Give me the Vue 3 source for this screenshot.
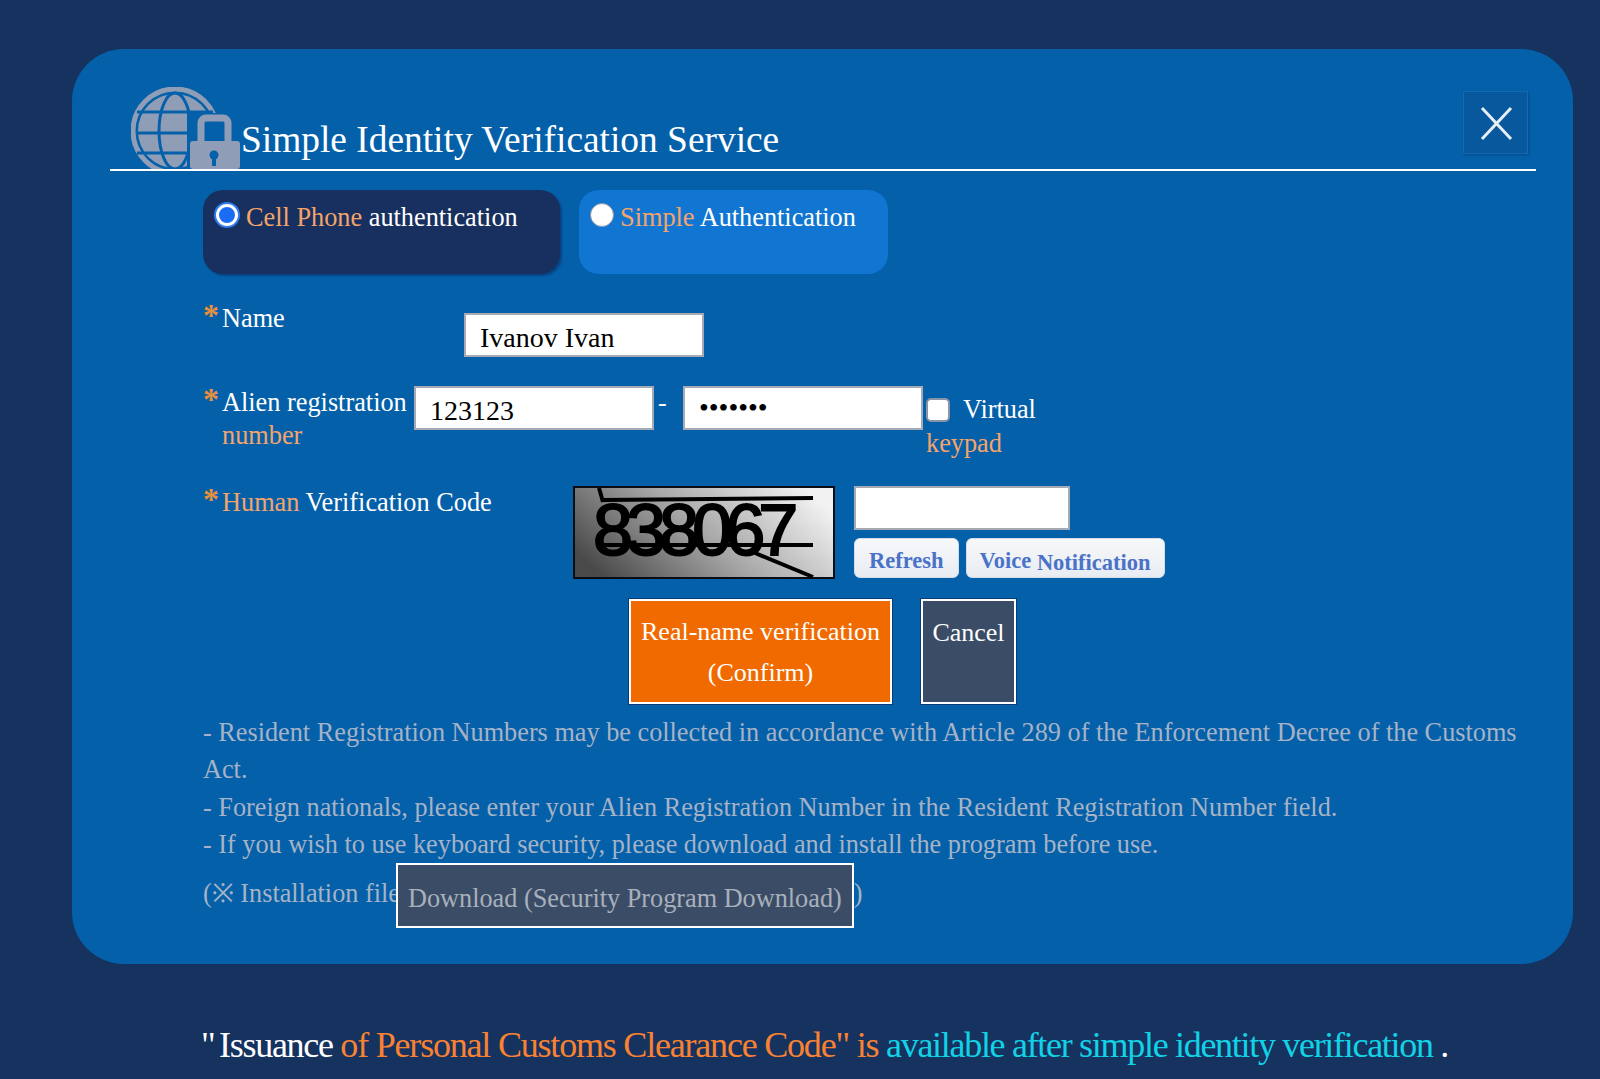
<template>
  <div class="page">
    <div class="modal">
      <div class="modal-head">
        <svg class="head-icon" viewBox="0 0 109 82" width="109" height="82">
          <circle cx="44" cy="44" r="42" fill="none" stroke="#8f9eb6" stroke-width="5" />
          <circle cx="44" cy="44" r="37" fill="#8f9eb6" />
          <ellipse cx="44" cy="44" rx="16" ry="38" fill="none" stroke="#0560aa" stroke-width="3" />
          <line x1="6" y1="25" x2="82" y2="25" stroke="#0560aa" stroke-width="3" />
          <line x1="6" y1="46" x2="82" y2="46" stroke="#0560aa" stroke-width="3" />
          <line x1="6" y1="66" x2="82" y2="66" stroke="#0560aa" stroke-width="3" />
          <rect x="56" y="26" width="60" height="60" fill="#0560aa" />
          <path d="M70 54V36a5 5 0 0 1 5-5h17a5 5 0 0 1 5 5v18" fill="none" stroke="#8f9eb6" stroke-width="7" />
          <rect x="59" y="54" width="50" height="28" rx="3" fill="#8f9eb6" />
          <circle cx="83" cy="68" r="4.5" fill="#0560aa" />
          <rect x="81" y="69" width="4" height="10" fill="#0560aa" />
        </svg>
        <h1 class="head-title">Simple Identity Verification Service</h1>
        <button class="close-btn" aria-label="Close">
          <svg viewBox="0 0 64 62" width="64" height="62">
            <path d="M18 16L47 47M47 16L18 47" stroke="#e6eef6" stroke-width="3" fill="none" />
          </svg>
        </button>
      </div>

      <div class="modal-body">
        <div class="tabs">
          <label class="tab" :class="{ active: method === 'phone' }">
            <input v-model="method" type="radio" value="phone" />
            <span><em>Cell Phone</em> authentication</span>
          </label>
          <label class="tab" :class="{ active: method === 'simple' }">
            <input v-model="method" type="radio" value="simple" />
            <span><em>Simple</em> Authentication</span>
          </label>
        </div>

        <div class="row row-name">
          <div class="label label-name"><i>*</i><span>Name</span></div>
          <input v-model="name" class="field" type="text" />
        </div>

        <div class="row row-alien">
          <div class="label label-alien"><i>*</i><span>Alien registration <em>number</em></span></div>
          <input v-model="regFront" class="field" type="text" />
          <span class="dash">-</span>
          <input v-model="regBack" class="field field-pw" type="password" />
          <div class="keypad">
            <label class="keypad-top"><input v-model="virtualKeypad" type="checkbox" /> <span>Virtual</span></label>
            <em>keypad</em>
          </div>
        </div>

        <div class="row row-human">
          <div class="label label-human"><i>*</i><span><em>Human</em> Verification Code</span></div>
          <svg class="captcha" viewBox="0 0 262 93" width="262" height="93">
            <defs>
              <linearGradient id="capBg" x1="0" y1="0.7" x2="1" y2="0.3">
                <stop offset="0" stop-color="#4a4a4a" />
                <stop offset="0.5" stop-color="#a8a8a8" />
                <stop offset="1" stop-color="#f2f2f2" />
              </linearGradient>
            </defs>
            <rect x="1" y="1" width="260" height="91" fill="url(#capBg)" stroke="#0c0c14" stroke-width="2" />
            <text x="20" y="69" class="captcha-text">838067</text>
            <path d="M26 2L30 16M30 14L240 12M30 59L240 59M182 67L240 91" stroke="#000" stroke-width="4" fill="none" />
          </svg>
          <div class="captcha-side">
            <input v-model="code" class="field field-code" type="text" />
            <div class="captcha-btns">
              <button class="light-btn">Refresh</button>
              <button class="light-btn light-btn-voice">Voice <span class="notif">Notification</span></button>
            </div>
          </div>
        </div>

        <div class="actions">
          <button class="btn-confirm">Real-name verification<br />(Confirm)</button>
          <button class="btn-cancel">Cancel</button>
        </div>

        <div class="notes">
          <p>- Resident Registration Numbers may be collected in accordance with Article 289 of the Enforcement Decree of the Customs Act.</p>
          <p>- Foreign nationals, please enter your Alien Registration Number in the Resident Registration Number field.</p>
          <p>- If you wish to use keyboard security, please download and install the program before use.</p>
          <div class="install">
            <span class="install-text">(※ Installation file</span>
            <button class="btn-download">Download (Security Program Download)</button>
            <span>)</span>
          </div>
        </div>
      </div>
    </div>

    <p class="foot">" <b class="first">Issuance</b> <span class="or">of Personal Customs Clearance Code" is</span> <span class="cy">available after simple identity verification</span> <b>.</b></p>
  </div>
</template>

<script setup>
import { ref } from 'vue'

const method = ref('phone')
const name = ref('Ivanov Ivan')
const regFront = ref('123123')
const regBack = ref('1234567')
const virtualKeypad = ref(false)
const code = ref('')
</script>

<style>
html, body {
  margin: 0;
  background: #16325f;
  overflow: hidden;
}
</style>

<style scoped>
.page {
  height: 1079px;
  padding: 49px 27px 0 72px;
  box-sizing: border-box;
  font-family: "Liberation Serif", serif;
  color: #fff;
}

.page em {
  font-style: normal;
  color: #f4a46a;
}

.modal {
  height: 915px;
  box-sizing: border-box;
  background: #0560aa;
  border-radius: 52px;
  padding: 0 37px 0 38px;
}

.modal-head {
  position: relative;
  height: 122px;
  box-sizing: border-box;
  border-bottom: 2px solid #fff;
  display: flex;
  align-items: flex-end;
  padding-left: 21px;
}

.head-icon {
  flex: none;
}

.head-title {
  margin: 0 0 7px 1px;
  font-size: 37.4px;
  font-weight: 400;
  line-height: 44px;
  white-space: nowrap;
}

.close-btn {
  position: absolute;
  top: 42px;
  right: 8px;
  width: 65px;
  height: 63px;
  padding: 0;
  background: #08589e;
  border: 1px solid #1469b0;
  box-shadow: 1px 1px 2px rgba(10, 40, 90, 0.4);
}

.close-btn svg {
  display: block;
}

.modal-body {
  padding: 19px 12px 0 93px;
}

.tabs {
  display: flex;
  gap: 19px;
}

.tab {
  width: 357px;
  height: 84px;
  box-sizing: border-box;
  padding: 12px 12px;
  display: flex;
  align-items: flex-start;
  gap: 7px;
  border-radius: 20px;
  background: #1176d2;
  font-size: 26.3px;
  line-height: 31px;
}

.tab + .tab {
  width: 309px;
  padding-left: 11px;
  gap: 6px;
}

.tab.active {
  background: #18305f;
  box-shadow: 2px 2px 2px rgba(10, 40, 90, 0.5);
}

.tab input {
  appearance: none;
  flex: none;
  width: 24px;
  height: 24px;
  margin: 1px 0 0;
  box-sizing: border-box;
  border-radius: 50%;
  background: #fff;
  border: 1px solid #8a94a6;
}

.tab input:checked {
  background: #1a6cf5;
  border: 4px solid #fff;
  outline: 2px solid #2f7bf0;
  outline-offset: -1px;
}

.row {
  display: flex;
  align-items: flex-start;
}

.row-name {
  margin-top: 39px;
}

.row-alien {
  margin-top: 29px;
}

.row-human {
  margin-top: 25px;
}

.label {
  flex: none;
  display: flex;
  font-size: 26.3px;
  line-height: 33px;
}

.label i {
  flex: none;
  width: 19px;
  font-style: normal;
  font-weight: 700;
  font-size: 32px;
  line-height: 27px;
  color: #e8913c;
}

.label-name {
  width: 261px;
  margin-top: -11px;
}

.label-alien {
  width: 211px;
}

.label-human {
  width: 370px;
}

.field {
  flex: none;
  width: 240px;
  height: 44px;
  box-sizing: border-box;
  padding: 6px 14px 0;
  border: 2px solid #a5aab5;
  background: #fff;
  color: #000;
  font-family: inherit;
  font-size: 28px;
  outline: none;
}

.field-pw {
  padding: 0 14px;
}

.dash {
  width: 29px;
  padding-left: 4px;
  box-sizing: border-box;
  font-size: 26px;
  line-height: 34px;
}

.keypad {
  margin-left: 3px;
  font-size: 26.3px;
  line-height: 34px;
}

.keypad-top {
  display: flex;
  align-items: center;
  gap: 13px;
  margin-top: 7px;
}

.keypad-top input {
  appearance: none;
  width: 24px;
  height: 24px;
  margin: -1px 0 0;
  background: #fff;
  border: 2px solid #8a94a6;
  border-radius: 5px;
}

.captcha {
  flex: none;
  display: block;
}

.captcha-text {
  font-family: "Liberation Sans", sans-serif;
  font-size: 72px;
  letter-spacing: -7px;
  fill: #000;
  stroke: #000;
  stroke-width: 2px;
}

.captcha-side {
  margin-left: 19px;
}

.field-code {
  width: 216px;
  display: block;
}

.captcha-btns {
  display: flex;
  gap: 7px;
  margin-top: 8px;
}

.light-btn {
  height: 40px;
  padding: 5px 14px 0;
  border: 1px solid #d6dde8;
  border-radius: 6px;
  background: linear-gradient(#f7f8fa, #e8ecf2);
  color: #4a72c8;
  font-family: inherit;
  font-size: 22.5px;
  font-weight: 700;
  white-space: nowrap;
}

.light-btn-voice {
  padding: 5px 13px 0;
}

.notif {
  position: relative;
  top: 2px;
}

.actions {
  display: flex;
  gap: 29px;
  margin: 20px 0 0 426px;
}

.btn-confirm,
.btn-cancel {
  height: 105px;
  box-sizing: border-box;
  border: 2px solid #fff;
  outline: 1px solid #0c3a78;
  color: #fff;
  font-family: inherit;
  font-size: 26px;
  line-height: 41px;
  padding: 0;
}

.btn-confirm {
  width: 263px;
  background: #f06a00;
}

.btn-cancel {
  width: 95px;
  background: #3b4d66;
  padding-bottom: 38px;
}

.notes {
  margin-top: 10px;
  color: #a6b3c6;
  font-size: 26.25px;
  line-height: 37.3px;
}

.notes p {
  margin: 0;
}

.install {
  display: flex;
  align-items: flex-start;
}

.install > span {
  padding-top: 12px;
}

.install-text {
  flex: none;
  width: 193px;
  white-space: nowrap;
}

.btn-download {
  height: 65px;
  box-sizing: border-box;
  padding: 6px 10px 0;
  background: #3b4d66;
  border: 2px solid #fff;
  color: #a8b0bc;
  font-family: inherit;
  font-size: 26.25px;
  white-space: nowrap;
}

.foot {
  margin: 56px 0 0 129px;
  font-size: 36px;
  line-height: 50px;
  letter-spacing: -1.3px;
  white-space: nowrap;
}

.foot b {
  font-weight: 400;
}

.foot .first {
  margin-left: -3px;
}

.or {
  color: #f98232;
  letter-spacing: -1.2px;
}

.cy {
  color: #12d2e6;
}
</style>
